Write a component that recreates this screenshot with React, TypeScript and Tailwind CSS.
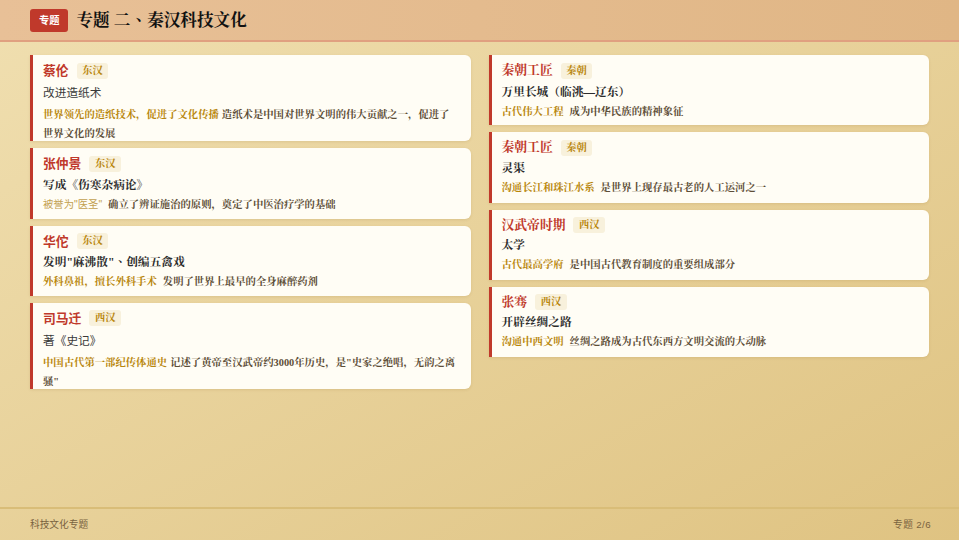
import type { ReactNode } from "react";

const serif = "font-['Liberation_Serif','Noto_Serif_CJK_SC','Noto_Sans_CJK_SC',serif]";
const sans = "font-['Liberation_Sans','Noto_Sans_CJK_SC',sans-serif]";

type Item = {
  name: string;
  era: string;
  work: ReactNode;
  tag: string;
  desc: string;
  sansName?: boolean;
  sansWork?: boolean;
  sansTag?: boolean;
  gap?: boolean;
  tall?: boolean;
};

// centred punctuation, as in the traditional-Chinese cut
function P({ children }: { children: string }) {
  return <span className="font-['Noto_Serif_CJK_TC',serif]">{children}</span>;
}

const left: Item[] = [
  { name: "蔡伦", era: "东汉", work: "改进造纸术", tag: "世界领先的造纸技术，促进了文化传播", desc: "造纸术是中国对世界文明的伟大贡献之一，促进了世界文化的发展", sansName: true, sansWork: true, tall: true },
  { name: "张仲景", era: "东汉", work: <>写成<P>《</P>伤寒杂病论<P>》</P></>, tag: "被誉为\"医圣\"", desc: "确立了辨证施治的原则，奠定了中医治疗学的基础", sansName: true, sansTag: true, gap: true },
  { name: "华佗", era: "东汉", work: <>发明"麻沸散"<P>、</P>创编五禽戏</>, tag: "外科鼻祖，擅长外科手术", desc: "发明了世界上最早的全身麻醉药剂", sansName: true, gap: true },
  { name: "司马迁", era: "西汉", work: "著《史记》", tag: "中国古代第一部纪传体通史", desc: "记述了黄帝至汉武帝约3000年历史，是\"史家之绝唱，无韵之离骚\"", sansName: true, sansWork: true, tall: true },
];

const right: Item[] = [
  { name: "秦朝工匠", era: "秦朝", work: <>万里长城<P>（</P>临洮—辽东<P>）</P></>, tag: "古代伟大工程", desc: "成为中华民族的精神象征", gap: true },
  { name: "秦朝工匠", era: "秦朝", work: "灵渠", tag: "沟通长江和珠江水系", desc: "是世界上现存最古老的人工运河之一", gap: true },
  { name: "汉武帝时期", era: "西汉", work: "太学", tag: "古代最高学府", desc: "是中国古代教育制度的重要组成部分", gap: true },
  { name: "张骞", era: "西汉", work: "开辟丝绸之路", tag: "沟通中西文明", desc: "丝绸之路成为古代东西方文明交流的大动脉", gap: true },
];

function Card({ item }: { item: Item }) {
  return (
    <div className={`overflow-hidden rounded-r-[6px] border-l-[3px] border-[#c0392b] bg-[#fffdf5] pl-[10px] pr-3 pt-[6px] shadow-[0_1px_3px_rgba(120,80,20,0.12)] [text-spacing-trim:space-all] ${item.tall ? "h-[86.3px]" : "h-[70.33px]"}`}>
      <div className="flex h-[19px] items-center">
        <span className={`text-[12.8px] font-bold leading-[19px] text-[#c0392b] ${item.sansName ? sans : serif}`}>{item.name}</span>
        <span className={`ml-2 rounded-[3px] bg-[#f8f1dc] px-[5.6px] text-[10.24px] font-bold leading-[16px] text-[#b8860b] ${serif}`}>{item.era}</span>
      </div>
      <div className={`text-[11.7px] ${item.sansWork ? `${sans} mt-[3.4px] leading-[20px] text-[#3a3a3a]` : `${serif} mt-[1.5px] font-bold leading-[19px] text-[#2c2c2c]`}`}>{item.work}</div>
      <p className={`text-[10.35px] leading-[18.4px] text-[#5d4e37] ${item.sansWork ? "mt-[1.6px]" : "mt-0"}`}>
        <span className={item.sansTag ? `${sans} text-[#c2a050]` : `${serif} font-bold text-[#b8860b]`}>{item.tag}</span>
        <span className={`${serif} font-bold ${item.gap ? "ml-[6px]" : "ml-[3px]"}`}>{item.desc}</span>
      </p>
    </div>
  );
}

export default function App() {
  return (
    <div className="flex h-[540px] w-[959px] flex-col overflow-hidden bg-gradient-to-br from-[#f0dfb0] to-[#dfc382]">
      <header className="flex h-[42px] shrink-0 items-center border-b-2 border-[#e0a080] bg-gradient-to-r from-[#e8c097] to-[#e0b685] px-[30px]">
        <span className={`rounded-[3px] bg-[#c0392b] px-[9px] text-[10.24px] font-bold leading-[23px] text-white ${sans}`}>专题</span>
        <h1 className={`ml-2 text-[16.64px] font-bold leading-[24px] text-[#111111] ${serif}`}>专题 二<P>、</P>秦汉科技文化</h1>
      </header>
      <main className="grid min-h-0 flex-1 grid-cols-2 items-start gap-x-[18px] px-[30px] pt-[13px]">
        <div className="flex flex-col gap-[7px]">
          {left.map((item) => (
            <Card key={item.name} item={item} />
          ))}
        </div>
        <div className="flex flex-col gap-[7px]">
          {right.map((item) => (
            <Card key={item.tag} item={item} />
          ))}
        </div>
      </main>
      <footer className={`flex h-[33px] shrink-0 items-center justify-between border-t-2 border-[#d9bd78] pl-[30px] pr-[28px] pt-px text-[9.7px] text-[#7a6340] ${sans}`}>
        <span>科技文化专题</span>
        <span className="tracking-[0.4px]">专题 2/6</span>
      </footer>
    </div>
  );
}
